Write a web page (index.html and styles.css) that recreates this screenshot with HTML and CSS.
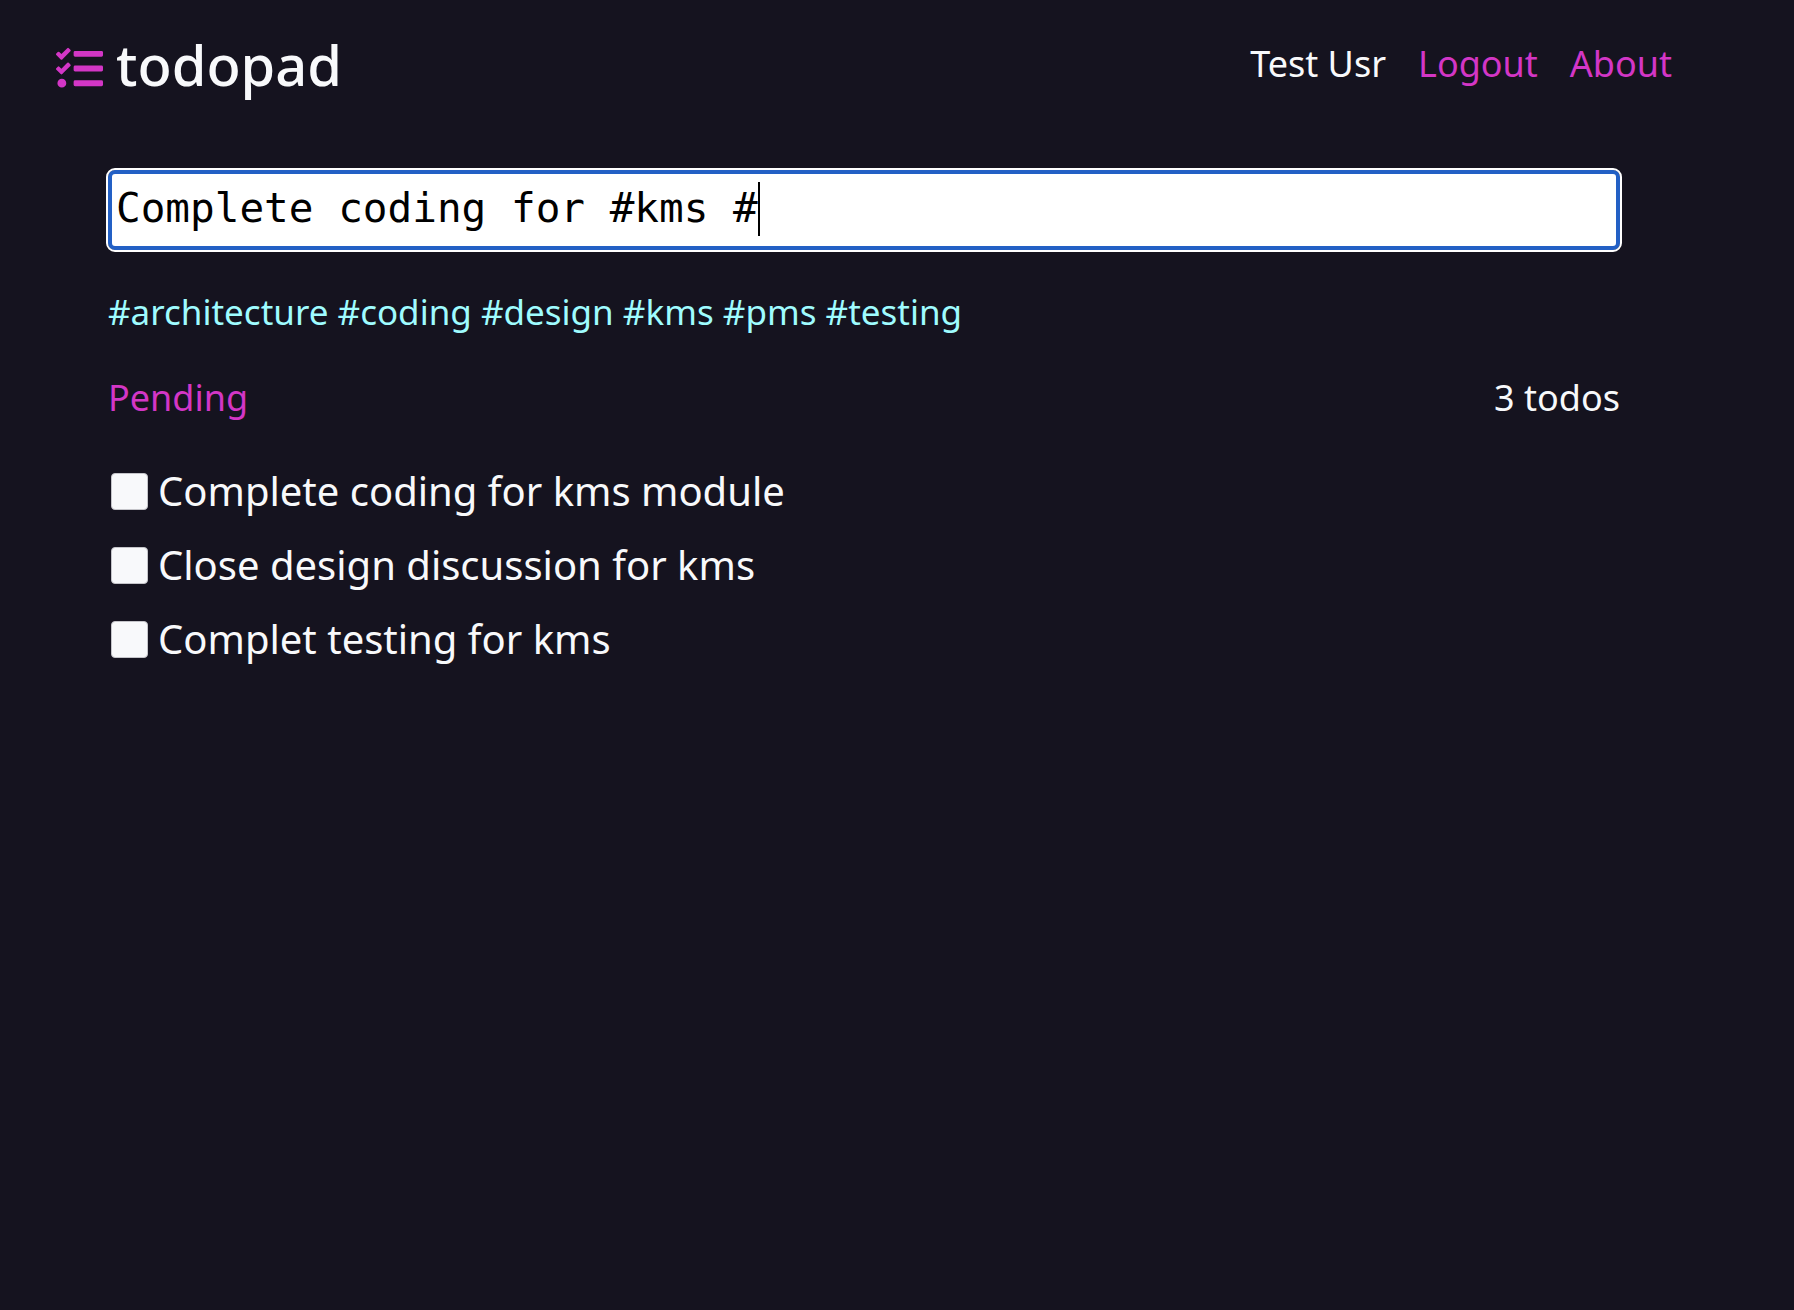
FILE: index.html
```html
<!DOCTYPE html>
<html lang="en">
<head>
<meta charset="utf-8">
<meta name="viewport" content="width=device-width, initial-scale=1">
<title>todopad</title>
<link rel="stylesheet" href="styles.css">
</head>
<body>
<header class="header">
  <h1 class="brand"><svg class="brand-icon" viewBox="0 0 512 512" aria-hidden="true"><path fill="currentColor" d="M139.61 35.5a12 12 0 0 0-17 0L58.93 98.81l-22.7-22.12a12 12 0 0 0-17 0L3.53 92.41a12 12 0 0 0 0 17l47.59 47.4a12.78 12.78 0 0 0 17.61 0l15.59-15.62L156.52 69a12.09 12.09 0 0 0 .09-17zm0 159.19a12 12 0 0 0-17 0l-63.68 63.72-22.7-22.1a12 12 0 0 0-17 0L3.53 252a12 12 0 0 0 0 17L51 316.5a12.77 12.77 0 0 0 17.6 0l15.7-15.69 72.2-72.22a12 12 0 0 0 .09-16.9zM64 368c-26.49 0-48.59 21.5-48.59 48S37.53 464 64 464a48 48 0 0 0 0-96zm432 16H208a16 16 0 0 0-16 16v32a16 16 0 0 0 16 16h288a16 16 0 0 0 16-16v-32a16 16 0 0 0-16-16zm0-320H208a16 16 0 0 0-16 16v32a16 16 0 0 0 16 16h288a16 16 0 0 0 16-16V80a16 16 0 0 0-16-16zm0 160H208a16 16 0 0 0-16 16v32a16 16 0 0 0 16 16h288a16 16 0 0 0 16-16v-32a16 16 0 0 0-16-16z"/></svg>todopad</h1>
  <nav class="nav">
    <span>Test Usr</span>
    <a href="#logout">Logout</a>
    <a href="#about">About</a>
  </nav>
</header>
<main class="main">
  <div class="entry">
    <input class="entry-input" type="text" aria-label="New todo" value="Complete coding for #kms #">
    <span class="caret"></span>
  </div>
  <div class="tags">
    <a href="#architecture">#architecture</a>
    <a href="#coding">#coding</a>
    <a href="#design">#design</a>
    <a href="#kms">#kms</a>
    <a href="#pms">#pms</a>
    <a href="#testing">#testing</a>
  </div>
  <div class="summary">
    <a href="#pending">Pending</a>
    <span>3 todos</span>
  </div>
  <ul class="todos">
    <li><label class="todo"><input class="check" type="checkbox">Complete coding for kms module</label></li>
    <li><label class="todo"><input class="check" type="checkbox">Close design discussion for kms</label></li>
    <li><label class="todo"><input class="check" type="checkbox">Complet testing for kms</label></li>
  </ul>
</main>
</body>
</html>
```
FILE: styles.css
```css
* {
  box-sizing: border-box;
}

body {
  margin: 0;
  background: #15131f;
  color: #f8f9fb;
  font-family: "Noto Sans", sans-serif;
  font-size: 36px;
  line-height: 48px;
}

a {
  color: #d336c6;
  text-decoration: none;
}

.header {
  display: flex;
  justify-content: space-between;
  align-items: center;
  padding: 28px 122px 0 56px;
}

.brand {
  margin: 0;
  font-size: 56px;
  font-weight: 500;
  line-height: 72px;
}

.brand-icon {
  width: 47px;
  height: 47px;
  margin-right: 13px;
  vertical-align: -6px;
  color: #d336c6;
}

.nav {
  display: flex;
  gap: 32px;
}

.main {
  padding: 70px 174px 0 108px;
}

.entry {
  position: relative;
}

.entry-input {
  display: block;
  width: 100%;
  height: 80px;
  padding: 0 4px 4px;
  border: 4px solid #2360c5;
  border-radius: 7px;
  outline: 2px solid #fff;
  background: #fff;
  color: #000;
  caret-color: transparent;
  font-family: "DejaVu Sans Mono", monospace;
  font-size: 41px;
}

/* Insertion point after the last typed character */
.caret {
  position: absolute;
  top: 12px;
  left: calc(8px + 26ch);
  width: 2px;
  height: 54px;
  background: #000;
  font-family: "DejaVu Sans Mono", monospace;
  font-size: 41px;
}

.tags {
  margin-top: 38px;
  font-size: 35px;
}

.tags a {
  color: #9ffcff;
}

.summary {
  display: flex;
  justify-content: space-between;
  margin-top: 38px;
}

.todos {
  margin: 32px 0 0;
  padding: 0;
  list-style: none;
}

.todo {
  display: flex;
  align-items: center;
  gap: 10px;
  min-height: 74px;
  padding-left: 3px;
  font-size: 40px;
}

.check {
  appearance: none;
  flex: none;
  width: 37px;
  height: 37px;
  margin: 0;
  border: 1px solid #c4c4c9;
  border-radius: 4px;
  background: #f8f9fb;
}

.check:checked {
  background: #d336c6;
}
```
